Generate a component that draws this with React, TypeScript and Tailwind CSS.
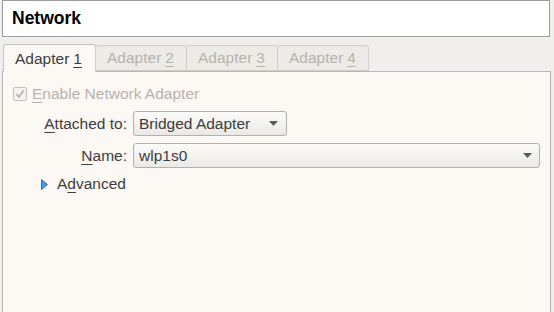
const tabs = ['1', '2', '3', '4'];

const Arrow = () => (
  <svg width="9" height="5" viewBox="0 0 9 5" className="shrink-0">
    <path d="M0 0 H9 L4.5 5 Z" fill="#5a5a58" />
  </svg>
);

export default function App() {
  return (
    <div
      className="w-[554px] h-[312px] overflow-hidden bg-[#f0efed] text-[15.5px] text-[#3c3c3c] flex flex-col"
      style={{ fontFamily: '"Liberation Sans", Arial, sans-serif' }}
    >
      <div className="ml-[2px] w-[548px] h-[37px] shrink-0 border border-[#9d9c9a] bg-white flex items-center pl-[9px]">
        <span className="text-[17.5px] font-bold text-black">Network</span>
      </div>

      <div className="mt-[7px] ml-[3px] flex items-end h-[27px] relative z-10">
        {tabs.map((n, i) =>
          i === 0 ? (
            <div
              key={n}
              className="w-[93px] h-[28px] -mb-px border border-b-0 border-[#c6c2bd] rounded-t-[3px] bg-[#fcf9f5] flex items-center pl-[11px] pt-[1px]"
            >
              Adapter <span className="underline underline-offset-[3px] ml-[4px]">{n}</span>
            </div>
          ) : (
            <div
              key={n}
              className="w-[92px] h-[26px] -ml-px border border-[#d2cec9] rounded-t-[3px] bg-[#edebe8] flex items-center pl-[11px] text-[#b6b2ad]"
            >
              Adapter <span className="underline underline-offset-[3px] ml-[4px]">{n}</span>
            </div>
          ),
        )}
      </div>

      <div className="ml-[2px] w-[549px] flex-1 border border-b-0 border-[#b9b5b0] bg-[#fcf9f5] pl-[10px] pt-[15px]">
        <div className="flex items-center gap-[5px] h-[14px]">
          <div className="w-[14px] h-[14px] border border-[#c5c1bc] rounded-[2px] bg-[#f4f2ef] flex items-center justify-center">
            <svg width="10" height="10" viewBox="0 0 10 10">
              <path d="M1.5 5 L4 8 L8.5 1.5" stroke="#b3afaa" strokeWidth="1.6" fill="none" />
            </svg>
          </div>
          <span className="text-[#b6b2ad]">
            <span className="underline underline-offset-[3px]">E</span>nable Network Adapter
          </span>
        </div>

        <div className="mt-[10px] grid grid-cols-[114px_1fr] gap-x-[6px] gap-y-[7px] items-center">
          <span className="text-right">
            <span className="underline underline-offset-[3px]">A</span>ttached to:
          </span>
          <div className="w-[154px] h-[25px] border border-[#b4b0aa] rounded-[3px] bg-linear-to-b from-[#fcfcfb] to-[#ebe9e6] flex items-center justify-between pl-[5px] pr-[8px]">
            <span>Bridged Adapter</span>
            <Arrow />
          </div>

          <span className="text-right">
            <span className="underline underline-offset-[3px]">N</span>ame:
          </span>
          <div className="w-[407px] h-[25px] border border-[#b4b0aa] rounded-[3px] bg-linear-to-b from-[#fcfcfb] to-[#ebe9e6] flex items-center justify-between pl-[5px] pr-[7px]">
            <span>wlp1s0</span>
            <Arrow />
          </div>
        </div>

        <div className="mt-[7px] ml-[28px] flex items-center gap-[9px] h-[18px]">
          <svg width="7" height="11" viewBox="0 0 7 11">
            <path d="M0.5 0.5 L6.5 5.5 L0.5 10.5 Z" fill="#4a9be0" stroke="#2a6fb8" strokeWidth="1" />
          </svg>
          <span>
            A<span className="underline underline-offset-[3px]">d</span>vanced
          </span>
        </div>
      </div>
    </div>
  );
}
